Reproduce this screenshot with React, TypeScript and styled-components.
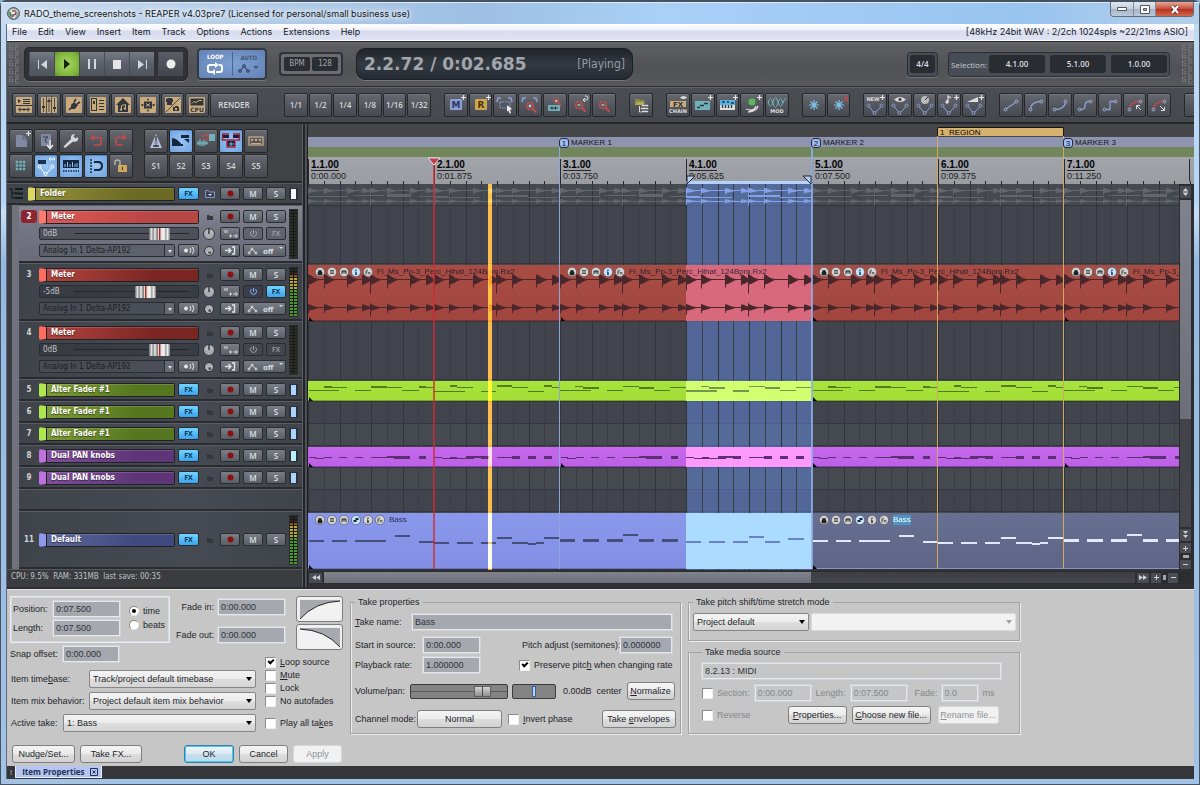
import React from "react";
import styled, { createGlobalStyle, css } from "styled-components";

/* ---------- tokens ---------- */
const UI = '"Open Sans", "Noto Sans", sans-serif';
const TITLE = 'Inter, "Open Sans", sans-serif';
const FORM = '"Liberation Sans", Arial, sans-serif';
const TRACK = '"DejaVu Sans Condensed", "DejaVu Sans", sans-serif';
const TAN = "#c9aa7c";
const TEAL = "#6fb0bb";
const BLUE = "#8c9fd6";
const RED = "#c64b4b";
const INK = "#33363b";
const LIGHT = "#d4d6da";

const MEASURE = 126;
const ROW = 22;
const TALL = 58;

const Global = createGlobalStyle`
  *, *::before, *::after { box-sizing: border-box; }
  body { margin: 0; background: #8fb4da; font-family: ${FORM}; }
  button, input, select { font: inherit; color: inherit; margin: 0; padding: 0; }
  fieldset { margin: 0; min-width: 0; }
  svg { display: block; }
`;

/* ---------- window frame ---------- */
const Window = styled.div`
  min-height: 100vh;
  display: flex;
  flex-direction: column;
  padding: 0 5px 5px;
  border-radius: 6px 6px 0 0;
  border: 1px solid #46525f;
  border-top-width: 2px;
  background: linear-gradient(#c3daf2 0, #b7d6f5 200px, #c8dff5 210px, #94b9e0 260px, #a3c3e6 100%);
`;
const TitleBar = styled.header`
  height: 22px;
  display: flex;
  align-items: center;
  gap: 4px;
  margin: 0 -5px;
  padding-left: 6px;
  background: linear-gradient(90deg, #c9dcf0 0, #bcd2ea 12%, #9dbfe3 40%, #a9d0f7 55%, #98c4f0 85%, #b4cfe9 100%);
  box-shadow: inset 0 1px 0 #dcebfa;
`;
const Title = styled.h1`
  flex: 1;
  margin: 0;
  font: 400 9px/13px ${TITLE};
  color: #10151c;
  text-shadow: 0 0 5px #fff, 0 0 8px #fff, 0 0 10px #fff;
`;
const WinButtons = styled.div`
  align-self: flex-start;
  display: flex;
  border: 1px solid #5f6c7b;
  border-top: 0;
  border-radius: 0 0 4px 4px;
  overflow: hidden;
  margin-right: 5px;
`;
const WinButton = styled.button<{ $close?: boolean }>`
  width: ${(p) => (p.$close ? 38 : 22)}px;
  height: 14px;
  border: 0;
  border-left: 1px solid #7f8d9d;
  display: grid;
  place-items: center;
  background: ${(p) =>
    p.$close ? "linear-gradient(#e6a595, #c8503c 48%, #b3301f 50%, #d2664a)" : "linear-gradient(#dfe8f1, #c3cfdc 48%, #a5b5c7 50%, #bccad9)"};
  &:first-child { border-left: 0; }
`;
const Client = styled.div`
  flex: 1;
  display: flex;
  flex-direction: column;
  min-width: 0;
  border-left: 1px solid #5a6a7c;
  background: #3f4145;
`;
const MenuBar = styled.nav`
  height: 17px;
  display: flex;
  align-items: center;
  padding: 0 6px 0 5px;
  border-bottom: 1px solid #fff;
  background: linear-gradient(#fff, #f0f2fa 35%, #d8dcef 45%, #dfe3f3);
  font: 400 9px/14px ${TITLE};
  color: #171a26;
`;
const MenuItem = styled.button`
  border: 0;
  background: none;
  margin-right: 11px;
`;
const MenuInfo = styled.span`
  margin-left: auto;
`;

/* ---------- transport ---------- */
const Transport = styled.section`
  height: 46px;
  display: flex;
  align-items: center;
  padding: 0 1px;
  border-top: 1px solid #23252a;
  border-bottom: 1px solid #2d2f33;
  background: linear-gradient(#6a6b6f 0, #5d5e62 3px, #515256 60%, #57585c);
`;
const Meander = styled.svg`
  flex: none;
  width: 12px;
  height: 40px;
`;
const ButtonWell = styled.div`
  display: flex;
  align-items: center;
  gap: 4px;
  margin-left: 4px;
  padding: 4px;
  border-radius: 5px;
  background: #303237;
  border: 1px solid #27292d;
  box-shadow: 0 1px 0 #74757a;
`;
const TransportKeys = styled.div`
  display: flex;
`;
const TransportKey = styled.button<{ $on?: boolean; $round?: boolean }>`
  width: 25px;
  height: 24px;
  border: 0;
  border-left: 1px solid #484b52;
  display: grid;
  place-items: center;
  background: ${(p) =>
    p.$on
      ? "radial-gradient(#a6da62, #7cb23c 75%, #5f8e2c)"
      : p.$round
        ? "linear-gradient(#5b5e66, #42454c)"
        : "linear-gradient(#767a84, #5b5f69 50%, #50545d)"};
`;
const LoopPad = styled.div`
  width: 70px;
  height: 32px;
  margin-left: 9px;
  display: flex;
  align-items: center;
  border: 2px solid #333a47;
  border-radius: 4px;
  background: radial-gradient(#7fa0d4, #6483b3);
  box-shadow: 0 1px 0 #74757a;
`;
const LoopKey = styled.button<{ $on?: boolean }>`
  flex: 1;
  height: 24px;
  border: 0;
  background: none;
  display: flex;
  flex-direction: column;
  align-items: center;
  justify-content: center;
  gap: 1px;
  font: 700 6px/8px ${TRACK};
  color: ${(p) => (p.$on ? "#fff" : "#44587c")};
  & + & { border-left: 1px solid #4c658d; }
`;
const Bpm = styled.div`
  display: flex;
  align-items: center;
  gap: 2px;
  height: 24px;
  margin-left: 12px;
  padding: 3px;
  border: 2px solid #303237;
  border-radius: 4px;
  background: #6a6c72;
`;
const BpmCell = styled.span`
  width: 26px;
  height: 14px;
  border-radius: 2px;
  text-align: center;
  font: 400 8px/14px ${TRACK};
  color: #a3a7ae;
  background: #2a2d32;
`;
const Display = styled.output`
  display: flex;
  align-items: center;
  justify-content: space-between;
  width: 277px;
  height: 32px;
  margin-left: 13px;
  padding: 0 7px;
  border: 1px solid #1c1f23;
  border-radius: 9px;
  background: linear-gradient(#20242a, #323941 50%, #252b32);
  box-shadow: 0 1px 0 #74757a;
  font: 700 17px/20px "DejaVu Sans", sans-serif;
  color: #a2a6ac;
`;
const PlayState = styled.span`
  font: 400 12px/20px ${TRACK};
  color: #969aa0;
`;
const TimePanel = styled.div<{ $push?: boolean }>`
  height: 25px;
  display: flex;
  align-items: center;
  gap: 5px;
  margin-left: ${(p) => (p.$push ? "auto" : "10px")};
  padding: 0 2px;
  border: 1px solid #2c2e33;
  border-radius: 3px;
  background: #484c54;
  box-shadow: 0 1px 0 #74757a;
  font: 400 8px/17px ${UI};
  color: #c9ccd1;
`;
const TimeCell = styled.span<{ $small?: boolean }>`
  width: ${(p) => (p.$small ? 25 : 56)}px;
  height: 18px;
  border-radius: 3px;
  text-align: center;
  background: #292c31;
  color: #dcdee2;
  font-weight: 600;
`;
const PanelLabel = styled.span`
  width: 33px;
`;

/* ---------- toolbar ---------- */
const Toolbar = styled.section`
  height: 37px;
  display: flex;
  align-items: center;
  gap: 13px;
  padding-left: 5px;
  overflow: hidden;
  border-top: 1px solid #606368;
  border-bottom: 2px solid #232528;
  background: linear-gradient(#4a4d51, #45484c);
`;
const ToolGroup = styled.div<{ $width: number }>`
  flex: none;
  display: flex;
  gap: 1px;
  width: ${(p) => p.$width}px;
`;
const ToolCluster = styled.div`
  flex: none;
  display: flex;
  gap: 1px;
  margin-right: 13px;
`;
const keyFace = css<{ $on?: boolean }>`
  border: 1px solid #25272b;
  border-radius: 2px;
  background: ${(p) => (p.$on ? "radial-gradient(#9cc6f4, #6fa3e0)" : "linear-gradient(#666a70, #54575d 50%, #474a50)")};
  box-shadow: inset 0 1px 0 ${(p) => (p.$on ? "#5c8cc8" : "#74777d")};
`;
const ToolKey = styled.button<{ $on?: boolean }>`
  flex: 1;
  min-width: 0;
  height: 24px;
  overflow: hidden;
  display: grid;
  place-items: center;
  ${keyFace}
  font: 600 8px/12px ${UI};
  color: ${LIGHT};
`;
const Spacer = styled.span`
  flex: none;
  width: 11px;
`;

/* ---------- main split ---------- */
const Main = styled.main`
  display: flex;
  align-items: stretch;
  border-bottom: 2px solid #2b2d30;
`;
const TrackPanel = styled.section`
  flex: none;
  width: 295px;
  display: flex;
  flex-direction: column;
  background: #3b3e44;
`;
const Splitter = styled.div`
  flex: none;
  width: 6px;
  background: linear-gradient(90deg, #5a5d63 0 1px, #232529 1px 3px, #4d5056 3px 5px, #1b1d20 5px);
`;
const PanelTools = styled.div`
  height: 59px;
  display: flex;
  gap: 11px;
  padding: 5px 2px 0;
  background: #404245;
  border-bottom: 2px solid #25272a;
`;
const ToolGrid = styled.div`
  display: grid;
  grid-template-columns: repeat(5, 24px);
  grid-auto-rows: 24px;
  gap: 1px;
`;
const TrackList = styled.div`
  display: flex;
  flex-direction: column;
`;
const Nested = styled.div`
  display: flex;
  flex-direction: column;
  border-left: 5px solid #3a3d42;
  background: #70737d;
  padding-left: 7px;
`;
const TrackRow = styled.div<{ $tall?: boolean; $lit?: boolean }>`
  height: ${(p) => (p.$tall ? TALL : ROW)}px;
  display: flex;
  align-items: center;
  gap: 3px;
  padding-right: 4px;
  border-top: 1px solid #5a5d63;
  border-bottom: 2px solid #292b2f;
  background: ${(p) => (p.$lit ? "linear-gradient(#868995, #747783 40%, #696c78)" : "linear-gradient(90deg, #3f434a, #464a52 60%, #3f434a)")};
`;
const TrackNumber = styled.span<{ $armed?: boolean; $top?: boolean }>`
  flex: none;
  width: 16px;
  height: 13px;
  text-align: center;
  font: 700 8px/13px ${TRACK};
  color: #d2d4d8;
  border-radius: 3px;
  margin-left: 2px;
  margin-right: -1px;
  ${(p) => p.$top && "align-self: flex-start; margin-top: 4px;"}
  ${(p) => p.$armed && "background: #8d2530; color: #fff;"}
`;
const TrackBody = styled.div`
  flex: 1;
  min-width: 0;
  display: flex;
  flex-direction: column;
  gap: 4px;
`;
const Strip = styled.div`
  display: flex;
  align-items: center;
  gap: 3px;
  height: 13px;
`;
const NameTag = styled.div<{ $chip: string; $from: string; $to: string }>`
  flex: 1;
  height: 14px;
  padding-left: 5px;
  border: 1px solid #1f2124;
  border-left: 7px solid ${(p) => p.$chip};
  border-radius: 2px;
  background: linear-gradient(100deg, ${(p) => p.$from}, ${(p) => p.$to} 70%);
  box-shadow: inset 1px 0 0 #1f2124, inset 0 1px 0 rgba(255, 255, 255, 0.15);
  font: 700 8px/12px ${TRACK};
  color: #fff;
  text-shadow: 0 1px 1px rgba(0, 0, 0, 0.5);
  white-space: nowrap;
`;
const MiniKey = styled.button<{ $width?: number; $tone?: "fx" | "dim" | "dark" }>`
  flex: none;
  width: ${(p) => p.$width ?? 20}px;
  height: 13px;
  display: grid;
  place-items: center;
  border: 1px solid #2a2c30;
  border-radius: 2px;
  font: 600 8px/10px ${UI};
  color: #dfe1e5;
  background: linear-gradient(#7a7e87, #5a5e67);
  ${(p) => p.$tone === "fx" && "background: linear-gradient(#72d4ff, #3ba4ee); color: #0c3350; font-weight: 700; font-size: 7px;"}
  ${(p) => p.$tone === "dim" && "background: rgba(70, 73, 80, 0.4); color: #a4a7ad; font-size: 7px;"}
  ${(p) => p.$tone === "dark" && "background: #3a3f4b; color: #8fb4ff;"}
`;
const IconCell = styled.span`
  flex: none;
  width: 15px;
  display: grid;
  place-items: center;
`;
const Fader = styled.div`
  flex: 1;
  min-width: 0;
  display: flex;
  align-items: center;
  height: 13px;
  border: 1px solid #2a2c30;
  border-radius: 2px;
  background: rgba(48, 51, 58, 0.55);
  font: 400 8px/11px ${TRACK};
  color: #c2c4c9;
`;
const FaderLabel = styled.label`
  flex: none;
  width: 34px;
  padding-left: 3px;
`;
const FaderInput = styled.input`
  appearance: none;
  flex: 1;
  width: 0;
  min-width: 0;
  height: 11px;
  margin-right: 9px;
  background: linear-gradient(transparent 5px, #24262a 5px 6px, transparent 6px);
  &::-webkit-slider-thumb {
    appearance: none;
    width: 21px;
    height: 12px;
    border-radius: 1px;
    background: linear-gradient(90deg, #6c6c6c, #ddd 12%, #888 20%, #eee 28%, #777 40%, #e8e8e8 45%, #a8281c 48% 53%, #ddd 56%, #f6f6f6 72%, #999 80%, #eee 88%, #777);
  }
`;
const Knob = styled.span<{ $small?: boolean }>`
  flex: none;
  width: ${(p) => (p.$small ? 10 : 12)}px;
  height: ${(p) => (p.$small ? 10 : 12)}px;
  margin: 0 ${(p) => (p.$small ? 3 : 2)}px 0 ${(p) => (p.$small ? 2 : 1)}px;
  border-radius: 50%;
  border: 1px solid #33353a;
  background: ${(p) =>
    p.$small ? "radial-gradient(circle at 60% 70%, #555 0 1px, #b9bbbf 2px, #95979c)" : "linear-gradient(90deg, #b5b7bb 4px, #55575c 4px 6px, #b5b7bb 6px) 0 0 / 100% 5px no-repeat, #a9abb0"};
`;
const DarkSelectBox = styled.div`
  flex: 1;
  min-width: 0;
  position: relative;
  &::after {
    content: "";
    position: absolute;
    right: 3px;
    top: 6px;
    border: 2px solid transparent;
    border-top: 3px solid #e0e2e6;
  }
`;
const DarkSelect = styled.select`
  appearance: none;
  display: block;
  width: 100%;
  height: 13px;
  padding-left: 3px;
  border: 1px solid #2a2c30;
  border-radius: 2px;
  background: linear-gradient(90deg, transparent calc(100% - 10px), #2a2c30 0 calc(100% - 9px), #666a73 0), rgba(80, 83, 92, 0.5);
  font: 400 8px/11px ${TRACK};
  color: #1c1e22;
`;
const MeterBox = styled.div`
  flex: none;
  width: 9px;
  height: 50px;
  border: 1px solid #2b2d31;
  background: #17191b;
`;
const Lamp = styled.div<{ $color: string }>`
  flex: none;
  width: 9px;
  height: 12px;
  border: 2px solid #2f3136;
  border-width: 1px 2px;
  background: ${(p) => p.$color};
`;
const StatusLine = styled.div`
  flex: none;
  height: 18px;
  padding-left: 4px;
  background: #3a3c40;
  border-top: 1px solid #55585d;
  font: 400 8px/13px ${TRACK};
  color: #c0c2c6;
  white-space: pre;
`;

/* ---------- timeline ---------- */
const Timeline = styled.section`
  flex: 1;
  min-width: 0;
  position: relative;
  overflow: hidden;
  display: flex;
  flex-direction: column;
  background: #2f3136;
`;
const RegionLane = styled.div`
  height: 13px;
  background: #454749;
  position: relative;
`;
const MarkerLane = styled.div`
  height: 10px;
  background: #8e94b0;
`;
const TempoLane = styled.div`
  height: 10px;
  background: #71865a;
`;
const BarLane = styled.div`
  position: relative;
  height: 27px;
  background: linear-gradient(#a3a5ac, #9a9ca2);
`;
const BarLabel = styled.div<{ $at: number }>`
  position: absolute;
  left: ${(p) => p.$at}px;
  top: 2px;
  min-height: 22px;
  padding-left: 2px;
  font: 400 9px/11px ${FORM};
  color: #1c1d20;
  border-left: 1px solid #26282c;
`;
const BarNumber = styled.div`
  width: 28px;
  padding-top: 1px;
  font: 700 10px/10px ${FORM};
  color: #000;
  border-bottom: 1px solid #26282c;
`;
const Flag = styled.div<{ $at: number }>`
  position: absolute;
  z-index: 6;
  top: 14px;
  left: ${(p) => p.$at}px;
  display: flex;
  align-items: center;
  gap: 2px;
  height: 10px;
  font: 400 8px/10px ${FORM};
  color: #14161c;
`;
const FlagNumber = styled.span`
  width: 10px;
  height: 10px;
  border: 1px solid #1d2c4a;
  border-radius: 3px;
  background: #9fb9ee;
  text-align: center;
  line-height: 9px;
`;
const RegionBar = styled.div<{ $at: number; $width: number }>`
  position: absolute;
  z-index: 6;
  top: 3px;
  left: ${(p) => p.$at}px;
  width: ${(p) => p.$width}px;
  height: 9px;
  padding-left: 2px;
  border: 1px solid #15140f;
  border-bottom: 0;
  border-radius: 2px 2px 0 0;
  background: #d6b26f;
  font: 400 8px/9px ${FORM};
  white-space: pre;
`;
const LaneRow = styled.div`
  display: flex;
`;
const LaneArea = styled.div`
  position: relative;
  flex: 1;
  min-width: 0;
  overflow: hidden;
  isolation: isolate;
`;
const Lane = styled.div<{ $tall?: boolean; $alt?: boolean }>`
  position: relative;
  height: ${(p) => (p.$tall ? TALL : ROW)}px;
  background: ${(p) => (p.$alt ? "#454a50" : "#41444d")};
  border-bottom: 1px solid #33363c;
`;
const Layer = styled.svg<{ $z: number }>`
  position: absolute;
  left: 0;
  top: 0;
  z-index: ${(p) => p.$z};
`;
const SelectionBand = styled.div`
  position: absolute;
  top: 0;
  bottom: 0;
  left: ${MEASURE * 3}px;
  width: ${MEASURE}px;
  background: rgba(99, 137, 225, 0.5);
`;
const ClipBox = styled.div<{ $at: number; $width: number; $fill: string; $edge: string }>`
  position: absolute;
  z-index: 2;
  top: 1px;
  bottom: 0;
  left: ${(p) => p.$at}px;
  width: ${(p) => p.$width}px;
  overflow: hidden;
  background: ${(p) => p.$fill};
  box-shadow: inset 0 -1px 0 ${(p) => p.$edge}, inset -1px 0 0 ${(p) => p.$edge};
`;
const ClipGlow = styled.div<{ $at: number; $fill: string }>`
  position: absolute;
  top: 0;
  bottom: 0;
  left: ${(p) => p.$at}px;
  width: ${MEASURE}px;
  background: ${(p) => p.$fill};
`;
const ClipHead = styled.div`
  position: relative;
  z-index: 1;
  display: flex;
  align-items: center;
  gap: 2px;
  padding: 2px 0 0 7px;
`;
const ClipName = styled.span<{ $picked?: boolean }>`
  margin-left: 2px;
  font: 400 8px/10px ${FORM};
  white-space: nowrap;
  color: ${(p) => (p.$picked ? "#fff" : "rgba(20, 24, 40, 0.85)")};
  background: ${(p) => (p.$picked ? "#4b94c4" : "none")};
`;
const TimeLine = styled.div<{ $at: number; $top: number; $color: string; $wide?: boolean }>`
  position: absolute;
  z-index: 5;
  left: ${(p) => p.$at}px;
  top: ${(p) => p.$top}px;
  bottom: 18px;
  width: ${(p) => (p.$wide ? 2 : 1)}px;
  background: ${(p) => p.$color};
`;
const PlayCursor = styled.div`
  position: absolute;
  z-index: 4;
  left: 180px;
  top: 0;
  bottom: 0;
  width: 4px;
  background: #bc7800;
  mix-blend-mode: plus-lighter;
`;
const EditHandle = styled.svg`
  position: absolute;
  z-index: 6;
  left: 119px;
  top: 33px;
`;
const SelectionHandles = styled.svg`
  position: absolute;
  z-index: 6;
  left: 378px;
  top: 51px;
`;
const VScroll = styled.div`
  flex: none;
  width: 15px;
  display: flex;
  flex-direction: column;
  align-items: center;
  gap: 2px;
  padding: 2px 3px 1px 1px;
  background: #2b2d31;
`;
const HScroll = styled.div`
  display: flex;
  align-items: center;
  gap: 2px;
  height: 13px;
  margin-top: 1px;
  padding: 1px 16px 1px 1px;
  background: #2b2d31;
`;
const ScrollKey = styled.button<{ $w?: number; $h?: number; $mark?: boolean }>`
  flex: none;
  width: ${(p) => p.$w ?? 11}px;
  height: ${(p) => p.$h ?? 11}px;
  display: grid;
  place-items: center;
  border: 0;
  background: ${(p) => (p.$mark ? "#a4a6ac" : "#4a4d53")};
`;
const ScrollTrack = styled.div<{ $vertical?: boolean }>`
  flex: 1;
  display: flex;
  flex-direction: ${(p) => (p.$vertical ? "column" : "row")};
  align-self: stretch;
  background: linear-gradient(#3d3f44, #44464c);
`;
const ScrollThumb = styled.div<{ $share: number }>`
  flex: 0 0 ${(p) => p.$share}%;
  background: linear-gradient(#80828c, #6d6f78);
`;

/* ---------- item properties ---------- */
const Properties = styled.form`
  flex: 1;
  display: flex;
  align-items: flex-start;
  gap: 7px;
  padding: 6px 4px 3px 3px;
  border-top: 1px solid #e2e2e2;
  background: #c6c6c6;
  font: 400 9px/12px ${FORM};
  color: #24252a;
`;
const ItemColumn = styled.div`
  flex: none;
  display: flex;
  flex-direction: column;
  gap: 12px;
  width: 333px;
`;
const ItemGrid = styled.div`
  display: grid;
  grid-template-columns: 160px 96px 22px 55px;
  grid-template-rows: 46px 24px 67px;
`;
const PositionBox = styled.div`
  display: flex;
  gap: 9px;
  width: 160px;
  height: 47px;
  padding: 4px 2px;
  border: 1px solid #e9ecf2;
  box-shadow: inset 0 0 0 1px #d4d8de;
`;
const Stack = styled.div<{ $gap: number }>`
  display: flex;
  flex-direction: column;
  gap: ${(p) => p.$gap}px;
`;
const RadioStack = styled(Stack)`
  padding-top: 4px;
`;
const Field = styled.div<{ $label?: number; $right?: boolean }>`
  display: flex;
  align-items: center;
  > label {
    flex: none;
    width: ${(p) => (p.$label ? p.$label + "px" : "auto")};
    padding-right: ${(p) => (p.$right ? 4 : 0)}px;
    text-align: ${(p) => (p.$right ? "right" : "left")};
    white-space: nowrap;
  }
`;
const SnapField = styled(Field)`
  grid-area: 2 / 1;
  align-self: center;
`;
const FadeStack = styled(Stack)`
  grid-area: 1 / 2 / 2 / 4;
  padding-top: 3px;
  padding-left: 3px;
`;
const CurveStack = styled(Stack)`
  grid-area: 1 / 4 / 3 / 5;
  align-items: flex-end;
`;
const ComboStack = styled(Stack)`
  grid-area: 3 / 1 / 4 / 3;
  padding-top: 4px;
  padding-right: 10px;
  padding-left: 1px;
`;
const CheckStack = styled.div`
  grid-area: 2 / 3 / 4 / 5;
  display: flex;
  flex-direction: column;
  gap: 1px;
  padding-top: 14px;
  margin-left: -1px;
`;
const TextBox = styled.input<{ $width?: number; $plain?: boolean }>`
  ${(p) => (p.$width ? `flex: none; width: ${p.$width}px;` : "flex: 1; min-width: 0;")}
  height: 16px;
  padding: 0 2px;
  border: 1px solid #e6e8ef;
  border-radius: 0;
  background: ${(p) => (p.$plain ? "#c6c6c6" : "#a6a8af")};
  color: #303338;
  box-shadow: 0 0 0 1px rgba(225, 228, 234, 0.4);
  &:disabled { background: #c6c6c6; color: #85878b; }
`;
const CurveKey = styled.button`
  width: 47px;
  height: 26px;
  padding: 2px;
  display: grid;
  place-items: center;
  border: 1px solid #7d7d7d;
  border-radius: 3px;
  background: #efefef;
`;
const SelectBox = styled.div<{ $width?: number; $off?: boolean }>`
  ${(p) => (p.$width ? `flex: none; width: ${p.$width}px;` : "flex: 1; min-width: 0;")}
  position: relative;
  &::after {
    content: "";
    position: absolute;
    right: 4px;
    top: 7px;
    border: 3px solid transparent;
    border-top: 4px solid ${(p) => (p.$off ? "#a0a0a0" : "#000")};
    border-bottom: 0;
  }
`;
const Combo = styled.select`
  appearance: none;
  display: block;
  width: 100%;
  height: 18px;
  padding: 0 3px;
  border: 1px solid #868686;
  border-radius: 2px;
  background: linear-gradient(#f3f3f3, #ececec 48%, #dedede 50%, #d4d4d4);
  &:disabled { background: #f2f2f2; border-color: #dcdcdc; opacity: 1; }
`;
const PushButton = styled.button<{ $width: number; $default?: boolean }>`
  width: ${(p) => p.$width}px;
  height: 18px;
  border: 1px solid ${(p) => (p.$default ? "#3a7ea4" : "#7f7f7f")};
  border-radius: 3px;
  background: linear-gradient(#f4f4f4, #ebebeb 48%, #dddddd 50%, #d2d2d2);
  white-space: nowrap;
  ${(p) => p.$default && "box-shadow: inset 0 0 0 1px #4fc8f2; background: linear-gradient(#eef6fb, #dceaf3 48%, #c7deeb 50%, #bcd9e9);"}
  &:disabled { background: #f1f1f1; border-color: #d8d8d8; color: #909195; }
`;
const ButtonRow = styled.div`
  display: flex;
  gap: 5px;
  padding-left: 2px;
`;
const Gap = styled.span<{ $width: number }>`
  flex: none;
  width: ${(p) => p.$width}px;
`;
const Tick = styled.label<{ $off?: boolean }>`
  display: flex;
  align-items: center;
  gap: 4px;
  height: 12px;
  white-space: nowrap;
  color: ${(p) => (p.$off ? "#85878b" : "inherit")};
`;
const LastTick = styled(Tick)`
  margin-top: 9px;
`;
const CheckMark = styled.input`
  appearance: none;
  flex: none;
  width: 11px;
  height: 11px;
  display: grid;
  place-items: center;
  background: #fff;
  border: 1px solid #efefef;
  border-top-color: #8a8a8a;
  border-left-color: #8a8a8a;
  &:checked::before {
    content: "";
    width: 6px;
    height: 4px;
    margin-top: -2px;
    border: solid #000;
    border-width: 0 0 2px 2px;
    transform: rotate(-45deg);
  }
`;
const RadioMark = styled.input`
  appearance: none;
  flex: none;
  width: 10px;
  height: 10px;
  border-radius: 50%;
  display: grid;
  place-items: center;
  background: #fff;
  border: 1px solid #e8e8e8;
  border-top-color: #888;
  border-left-color: #888;
  &:checked::before { content: ""; width: 4px; height: 4px; border-radius: 50%; background: #000; }
`;
const Group = styled.fieldset<{ $height: number; $inset?: boolean }>`
  height: ${(p) => p.$height}px;
  padding: ${(p) => (p.$inset ? "0 18px 0 13px" : "0 3px 0 4px")};
  border: 1px solid #a2a2a2;
  box-shadow: 1px 1px 0 #ececec, inset 1px 0 0 #ececec;
`;
const Legend = styled.legend`
  padding: 0 3px;
  height: 12px;
`;
const Line = styled.div<{ $top: number }>`
  display: flex;
  align-items: center;
  min-height: 16px;
  margin-top: ${(p) => p.$top}px;
`;
const LineLabel = styled.label<{ $width?: number; $off?: boolean }>`
  flex: none;
  width: ${(p) => (p.$width ? p.$width + "px" : "auto")};
  white-space: nowrap;
  color: ${(p) => (p.$off ? "#85878b" : "inherit")};
`;
const TakeColumn = styled.div`
  flex: none;
  width: 331px;
`;
const SourceColumn = styled.div`
  flex: none;
  width: 332px;
  display: flex;
  flex-direction: column;
  gap: 5px;
`;
const PropSlider = styled.input<{ $width: number; $pan?: boolean }>`
  appearance: none;
  flex: none;
  width: ${(p) => p.$width}px;
  height: 15px;
  margin-right: 4px;
  border: 1px solid #3c3c3c;
  border-radius: 2px;
  background: linear-gradient(transparent 6px, ${(p) => (p.$pan ? "transparent" : "#5c5c5c")} 6px 7px, transparent 7px), #838383;
  &::-webkit-slider-thumb {
    appearance: none;
    width: ${(p) => (p.$pan ? 4 : 17)}px;
    height: 11px;
    border: 1px solid ${(p) => (p.$pan ? "#345f9e" : "#606060")};
    background: ${(p) => (p.$pan ? "#b9d4ff" : "linear-gradient(90deg, transparent 7px, #444 7px 8px, transparent 8px), linear-gradient(#d5d5d5, #8f8f8f)")};
  }
`;
const DockTabs = styled.footer`
  height: 13px;
  display: flex;
  align-items: stretch;
  gap: 3px;
  padding-left: 3px;
  background: #34363a;
  color: #cfd1d5;
  font: 400 8px/12px ${UI};
`;
const DockTab = styled.button`
  display: flex;
  align-items: center;
  gap: 5px;
  height: 12px;
  padding: 0 3px 0 6px;
  border: 1px solid #e7eeff;
  border-top: 0;
  background: #b5c6f0;
  font: 700 8px/10px ${UI};
  color: #1c3158;
`;

/* ---------- drawn icons ---------- */
const Env = ({ c = BLUE }: { c?: string }) => (
  <g stroke={c} fill="none" strokeWidth="1">
    <path d="M6.500 14l4 5M13 19l4.500-5" />
    <circle cx="5.500" cy="12.500" r="1.500" />
    <circle cx="11.500" cy="20" r="1.500" />
    <circle cx="18.500" cy="12.500" r="1.500" />
  </g>
);
const Plus = () => <path d="M19.500 2v5M17 4.500h5" stroke="#e4e6ea" strokeWidth="1.200" />;
const Tan = ({ children }: { children: React.ReactNode }) => (
  <g>
    <rect x="4" y="4" width="16" height="16" rx="1" fill={TAN} />
    {children}
  </g>
);
const Lens = ({ sign }: { sign?: boolean }) => (
  <g stroke={RED} fill="none" strokeWidth="1.300">
    <circle cx="11" cy="12" r="3.400" />
    <path d="M13.500 14.500l4 4" strokeWidth="2" />
    <path d={sign ? "M9.500 12h3M11 10.500v3" : "M9.500 12h3"} stroke="#e6e6e6" strokeWidth="1.200" />
  </g>
);
const Curve = ({ d, a, b, c = BLUE, extra }: { d: string; a: [number, number]; b: [number, number]; c?: string; extra?: React.ReactNode }) => (
  <g fill="none">
    <path d={d} stroke={c} strokeWidth="1.300" />
    <circle cx={a[0]} cy={a[1]} r="1.400" stroke="#a8b4dc" />
    <circle cx={b[0]} cy={b[1]} r="1.400" stroke="#a8b4dc" />
    {extra}
  </g>
);
const Snow = ({ x }: { x?: boolean }) => (
  <g stroke="#7fc4ea" strokeWidth="1.200">
    <path d="M12 7v10M7 12h10M8.500 8.500l7 7M15.500 8.500l-7 7" />
    {x && <path d="M17 4l4 4M21 4l-4 4" stroke={RED} />}
  </g>
);

const ICONS: Record<string, React.ReactNode> = {
  list: <Tan><path d="M6 6l3 2-3 2zM11 6h7v1h-7zM11 8h7v1h-7zM11 10h7v1h-7zM4 12h16v1H4z" fill={INK} /><path d="M6 16.500h12M8 14.500v4M12 15v3M16 14.500v4" stroke={INK} /></Tan>,
  mixer: <Tan><path d="M6.500 5v14M9.500 4v16M12 5v14M14.500 4v16M17.500 5v14" stroke={INK} strokeWidth=".8" /><path d="M5 13h3v2H5zM10.500 7h3v2h-3zM16 14h3v2h-3z" fill={INK} /></Tan>,
  plug: <Tan><path d="M7 17l3-3M14 6l-2 3M18 9l-3 2" stroke={INK} strokeWidth="1.600" /><path d="M9 12l3-3 4 3-3 4-4 0z" fill={INK} /></Tan>,
  rack: <Tan><rect x="5.500" y="5.500" width="5" height="12" fill="none" stroke={INK} /><path d="M7 8h2v3H7zM13 7h5v1h-5zM13 10h5v1h-5zM13 13h5v1h-5zM13 16h5v1h-5z" fill={INK} /></Tan>,
  house: <Tan><path d="M12 5l7 7h-2v7H7v-7H5z" fill={INK} /><path d="M10.500 16.500v-4l4-1v4" stroke={TAN} fill="none" /><circle cx="10" cy="16.500" r="1.200" fill={TAN} /><circle cx="14" cy="15.500" r="1.200" fill={TAN} /></Tan>,
  route: <Tan><rect x="8" y="8.500" width="8" height="7" fill={INK} /><path d="M12 5.500v13M5.500 12h13" stroke={INK} strokeWidth="1.400" strokeDasharray="2 9" /><path d="M5 12l2-1.500v3zM19 12l-2-1.500v3z" fill={INK} /><path d="M10 10.500l4 3M14 10.500l-4 3" stroke={TAN} /></Tan>,
  swap: <Tan><path d="M5 6l2-1h3l2 1v3h-1v3H6V9H5zM12 14h2v-1h3v1h1v4h-6z" fill={INK} /><path d="M5 19L19 5" stroke={INK} strokeWidth=".8" /><circle cx="15" cy="16" r="1.200" fill={TAN} /></Tan>,
  cpu: <Tan><rect x="5.500" y="5.500" width="13" height="7" fill={INK} /><path d="M7 10.500l2-2 2 1 3-2 3 0" stroke={TAN} fill="none" /><text x="12" y="19" fontSize="6" fontWeight="700" textAnchor="middle" fill={INK} fontFamily="DejaVu Sans">CPU</text></Tan>,
  marker: <g><rect x="6" y="6" width="12" height="11" rx="1" fill={BLUE} /><text x="12" y="15" fontSize="9" fontWeight="700" textAnchor="middle" fill="#2b3a66" fontFamily="DejaVu Sans">M</text><Plus /></g>,
  region: <g><rect x="6" y="6" width="12" height="11" rx="1" fill="#cfa64f" /><text x="12" y="15" fontSize="9" fontWeight="700" textAnchor="middle" fill="#4a3508" fontFamily="DejaVu Sans">R</text><Plus /></g>,
  select: <g fill="none"><path d="M4 9l1-4h3M15 5h3l1 4" stroke={BLUE} strokeWidth="1.600" /><rect x="7" y="9" width="10" height="6" fill="#4c5468" stroke="#a2a8b4" strokeDasharray="1.500 1" /><path d="M14 12l5 4-2 1 1 3-1.500.5-1-3-1.500 1z" fill="#eee" /></g>,
  zoomsel: <g><path d="M4 9l1-4h3M15 5h3l1 4" stroke={BLUE} strokeWidth="1.600" fill="none" /><g transform="translate(1 1)"><Lens sign /></g></g>,
  zoomitem: <g><rect x="5" y="12" width="12" height="6" fill={TEAL} /><path d="M7 15h8M9 13.500v3M12.500 13.500v3" stroke={INK} /><g transform="translate(5 -1) scale(.75)"><Lens sign /></g></g>,
  zoomback: <g><Lens /><path d="M15 7h3a2 2 0 000-4h-1M17 5l-2 2 2 2" stroke="#ddd" fill="none" /></g>,
  zoomout: <Lens />,
  folder: <g><path d="M6 6h4l1 1h4v2H9l-3 4z" fill="#8e8842" /><path d="M6 12l2-3h8l-2 3z" fill="#b5ad58" /><path d="M10.500 13v6h2" stroke="#ddd" fill="none" /><path d="M13 12h6v1h-6zM12 15h7v1h-7zM13 18h6v1h-6z" fill="#ddd" stroke="#ddd" strokeWidth=".5" /></g>,
  fxchain: <g><rect x="4" y="8" width="16" height="6" fill={TAN} /><text x="12" y="14" fontSize="7" fontWeight="700" textAnchor="middle" fill={INK} fontFamily="DejaVu Sans">FX</text><text x="12" y="20" fontSize="5" textAnchor="middle" fill="#ddd" fontFamily="DejaVu Sans">CHAIN</text><path d="M14 4.500q3.500-3 7 0q-3.500 3-7 0" fill="#ddd" /></g>,
  envitem: <g><rect x="4" y="8" width="15" height="9" fill={TEAL} /><path d="M6 14.500h3M9 12.500h4M13 10.500h4" stroke={INK} strokeWidth="1.400" /><Plus /></g>,
  midi: <g><rect x="4" y="7" width="15" height="5" fill="#4fb4e8" /><rect x="4" y="12" width="15" height="5" fill="#ddd" /><path d="M6 9h3M11 9h2M15 10h3M6.500 12v3M9.500 12v3M12.500 12v3M15.500 12v3" stroke={INK} strokeWidth="1.400" /><Plus /></g>,
  mic: <g><circle cx="12" cy="9" r="3.500" fill="#5cb85c" /><path d="M6 16q8 3 10-3M8 19q9-1 10-6" stroke="#ddd" fill="none" strokeWidth="1.300" /><Plus /></g>,
  mod: <g><path d="M3 10q2.500-9 5 0t5 0t5 0M3 9q2.500 9 5 0t5 0t5 0M21 5q-2 2-3 5" stroke={TEAL} fill="none" /><text x="12" y="20" fontSize="5" fontWeight="700" textAnchor="middle" fill="#ddd" fontFamily="DejaVu Sans">MOD</text></g>,
  snow: <Snow />,
  snowx: <Snow x />,
  envnew: <g><text x="10" y="8" fontSize="5" fontWeight="700" textAnchor="middle" fill="#ddd" fontFamily="DejaVu Sans">NEW</text><Plus /><Env /></g>,
  enveye: <g><path d="M6 6.500q6-5 12 0q-6 5-12 0" fill="#ddd" /><circle cx="12" cy="6.500" r="1.500" fill={INK} /><Env /></g>,
  envknob: <g><circle cx="12" cy="7" r="4" fill="#bbb" /><path d="M12 7l3-3" stroke={INK} /><Env /></g>,
  envnote: <g><path d="M11 9V3l3 2" stroke="#ddd" fill="none" strokeWidth="1.300" /><circle cx="10" cy="9" r="1.700" fill="#ddd" /><Plus /><Env /></g>,
  envfade: <g><path d="M5 9l11-5v5z" fill="#ddd" /><Plus /><Env /></g>,
  lin: <Curve d="M7.500 15.500L16.500 9.500" a={[6.5, 16.5]} b={[17.5, 8.5]} />,
  arc: <Curve d="M6.500 15Q8 9 16 8.500" a={[6.5, 16.5]} b={[17.5, 8.5]} />,
  arc2: <Curve d="M8 16.500Q16 16 17.500 10" a={[6.5, 16.5]} b={[17.5, 8.5]} />,
  ess: <Curve d="M8 16.500Q12 16.500 12 12.500Q12 8.500 16 8.500" a={[6.5, 16.5]} b={[17.5, 8.5]} />,
  step: <Curve d="M8 16.500h4V8.500h4" a={[6.5, 16.5]} b={[17.5, 8.5]} />,
  arcup: <Curve d="M6.500 15Q8 9 16 8.500" a={[6.5, 16.5]} b={[17.5, 8.5]} c={RED} extra={<path d="M18 17l-4-4M13.500 16v-3.500H17" stroke="#ddd" />} />,
  arcdn: <Curve d="M6.500 15Q8 9 16 8.500" a={[6.5, 16.5]} b={[17.5, 8.5]} c={RED} extra={<path d="M13 13l4 4M17.500 14v3.500H14" stroke="#ddd" />} />,
  more: <path d="M11 8h2v8h-2z" fill={LIGHT} />,
  doc: <g><path d="M7 6h7l4 4v8H7z" fill="#8088a4" /><path d="M14 6v4h4" stroke="#5b6177" fill="none" /><Plus /></g>,
  docsave: <g><path d="M7 5h10v12H7z" fill="#8088a4" /><path d="M9 8h5l-3 3 2 3" stroke={INK} fill="none" /><path d="M16 11v8M13 16l3 3.500 3-3.500" stroke="#e4e6ea" fill="none" strokeWidth="1.500" /></g>,
  wrench: <path d="M6 19l-1.500-1.500L12 10q-1-4 3-5l1 0-1.500 2.500 2 2L19 8q1 4-3 5l-2-.5z" fill={LIGHT} />,
  undo: <path d="M10 6L7.500 8.500l2.500 2.500M8 8.500h7.500q1.500 0 1.500 1.500v4.500q0 1.500-1.500 1.500H10" stroke={RED} fill="none" strokeWidth="1.700" />,
  redo: <path d="M14 6l2.500 2.500L14 11M16 8.500H8.500Q7 8.500 7 10v4.500Q7 16 8.500 16H14" stroke={RED} fill="none" strokeWidth="1.700" />,
  metro: <g><path d="M12 5l6 14H6z" fill="#b9c2dc" /><path d="M12 7v11M9 17l6 0" stroke={INK} strokeWidth="1.300" /><circle cx="12" cy="14" r="2" fill="#8792b6" /></g>,
  xfade: <g fill="#16283f"><path d="M3 9q5 0 10 7H3zM12 6h8v3h-8zM15 10h5v4z" /><path d="M3 15h11v2H3z" /></g>,
  group: <g><rect x="15" y="5" width="6" height="7" fill={TEAL} /><rect x="9" y="6" width="5" height="5" fill="none" stroke={RED} /><path d="M3 14h11M4 12v4M6 10v7M8 12v5M10 11v6M12 12v4" stroke={TEAL} strokeWidth="1.300" /></g>,
  ripple: <g><path d="M4 6h6v3H4zM14 6h6v3h-6zM8 12h8v5H8z" fill="#14233c" /><path d="M3.500 5v6H7M20.500 5v6H17M3 5h7M14 5h7M8 11h8v7H8z" stroke="#a42034" fill="none" strokeWidth="1.300" /><path d="M10 15h5M12 13v4" stroke="#7fb0ec" /></g>,
  ruler: <g><rect x="5" y="8" width="14" height="8" fill="none" stroke={TAN} strokeWidth="1.300" /><path d="M7 10h2v2H7zM11 10h2v2h-2zM15 10h2v2h-2zM7 14h10v1H7z" fill={TAN} /></g>,
  grid: <path d="M7 7h2v2H7zM10.500 7h2v2h-2zM14 7h2v2h-2zM7 10.500h2v2H7zM10.500 10.500h2v2h-2zM14 10.500h2v2h-2zM7 14h2v2H7zM10.500 14h2v2h-2zM14 14h2v2h-2z" fill={TEAL} stroke={TEAL} strokeWidth=".5" />,
  envmove: <g><rect x="4" y="6" width="8" height="4" fill="#1a3152" /><path d="M15 5h6M16.500 3.500L15 5l1.500 1.500M19.500 3.500L21 5l-1.500 1.500" stroke="#fff" fill="none" /><Env c="#fff" /></g>,
  keys: <g><rect x="4" y="6" width="16" height="8" fill="#16283f" /><path d="M6 10v3M8.500 8v5M11 10v3M13.500 8v5M16 10v3M18 9v4" stroke="#8dbcf2" /><path d="M4 17h16" stroke="#16283f" strokeWidth="1.500" strokeDasharray="1.500 1" /></g>,
  snap: <g fill="none" stroke="#16283f"><path d="M7 5v14" strokeWidth="1.500" strokeDasharray="2 1" /><path d="M10 8h4q4 0 4 4t-4 4h-4" strokeWidth="2" /></g>,
  lock: <g><path d="M6 11V8q0-2 2.500-2T11 8v3" stroke="#b6b2a8" fill="none" strokeWidth="1.500" /><rect x="9" y="11" width="9" height="7" fill="#d0a85c" /><path d="M13 13h1v3h-1z" fill={INK} /></g>,
};
const Icon = ({ name }: { name: string }) => (
  <svg width="22" height="22" viewBox="1 1 22 22">{ICONS[name]}</svg>
);

/* ---------- data ---------- */
type Tone = { chip: string; from: string; to: string };
const RED_TONE: Tone = { chip: "#ff6c60", from: "#b24540", to: "#7c2624" };
const LIT_TONE: Tone = { chip: "#ff7b6e", from: "#dd5a56", to: "#b84643" };
const GREEN_TONE: Tone = { chip: "#aee84e", from: "#7f9c36", to: "#55771f" };
const PURPLE_TONE: Tone = { chip: "#bd72e0", from: "#80509a", to: "#5e3677" };
const BLUE_TONE: Tone = { chip: "#8f9aec", from: "#5d679c", to: "#414a7e" };

type Track = { n: number; name: string; tone: Tone; fader?: { db: string; at: number }; live?: boolean; armed?: boolean; tall?: boolean; lamp?: string };
const TRACKS: Track[] = [
  { n: 2, name: "Meter", tone: LIT_TONE, fader: { db: "0dB", at: 80 }, armed: true },
  { n: 3, name: "Meter", tone: RED_TONE, fader: { db: "-5dB", at: 65 }, live: true },
  { n: 4, name: "Meter", tone: RED_TONE, fader: { db: "0dB", at: 80 } },
  { n: 5, name: "Alter Fader #1", tone: GREEN_TONE, lamp: "#a9d4ff" },
  { n: 6, name: "Alter Fader #1", tone: GREEN_TONE, lamp: "#a9d4ff" },
  { n: 7, name: "Alter Fader #1", tone: GREEN_TONE, lamp: "#a9d4ff" },
  { n: 8, name: "Dual PAN knobs", tone: PURPLE_TONE, lamp: "#b8ecff" },
  { n: 9, name: "Dual PAN knobs", tone: PURPLE_TONE, lamp: "#a9d4ff" },
  { n: 10, name: "", tone: BLUE_TONE },
  { n: 11, name: "Default", tone: BLUE_TONE, tall: true, live: true },
];

type Note = [number, number, number, number?];
const GREEN_NOTES: Note[] = [
  [1, 30, 9], [16, 8, 5, 2], [24, 15, 6], [47, 16, 9], [63, 16, 5, 2], [79, 15, 6], [94, 17, 9], [111, 7, 5, 2], [118, 8, 6],
  [126, 31, 10], [142, 7, 4, 2], [149, 16, 6], [173, 15, 10], [189, 15, 4, 2], [204, 16, 6], [220, 16, 10], [236, 8, 4, 2], [244, 8, 6],
  [252, 31, 9], [267, 8, 5], [275, 16, 6, 2], [299, 16, 9], [315, 16, 5], [331, 15, 6, 2], [346, 16, 9], [362, 16, 6],
  [378, 31, 9, 2], [393, 8, 5], [401, 16, 6, 2], [425, 16, 9, 2], [441, 16, 5], [457, 15, 6, 2], [472, 16, 9], [488, 15, 6],
];
const PURPLE_NOTES: Note[] = [
  [1, 7, 10], [7, 9, 11], [16, 8, 10], [31, 8, 10], [47, 8, 10], [63, 16, 10], [79, 23, 9, 2], [86, 16, 10, 2], [111, 7, 9, 3],
  [126, 8, 10], [134, 24, 11], [142, 7, 10], [158, 23, 9, 2], [158, 8, 10, 2], [173, 8, 10, 2], [189, 16, 10], [204, 8, 9, 3], [220, 8, 9, 3], [236, 8, 9, 3],
];
const BASS_NOTES: Note[] = [
  [1, 15, 27, 2], [24, 15, 27, 2], [47, 31, 27, 2], [87, 15, 22, 2], [111, 15, 28, 2],
  [126, 15, 29, 2], [149, 16, 29, 2], [173, 15, 29, 2], [189, 15, 24, 2], [204, 16, 29, 2], [220, 8, 30, 2], [228, 8, 29, 2], [236, 15, 24, 2],
  [252, 15, 26, 3], [275, 16, 26, 3], [299, 16, 26, 3], [315, 15, 21, 2], [331, 15, 26, 3], [354, 16, 26, 3],
  [378, 15, 28, 2], [401, 16, 28, 2], [425, 15, 28, 2], [441, 15, 23, 2], [457, 15, 28, 2], [480, 16, 25, 2],
];
const HITS: [number, number][] = [
  [0, 9], [16, 9], [39, 8], [54, 6], [62, 14], [79, 9], [102, 8], [118, 6],
  [126, 11], [141, 9], [165, 8], [181, 6], [188, 14], [204, 9], [228, 8], [244, 6],
];
const wave = (mid: number, gain: number) =>
  HITS.map(([x, a]) => {
    const h = a * gain;
    const b = 5 * gain;
    return `M${x} ${mid - h * 0.6}L${x + 1} ${mid - b}L${x + 3} ${mid - b * 0.8}L${x + 6} ${mid - b * 0.35}L${x + 12} ${mid}L${x + 8} ${mid + b * 0.35}L${x + 4} ${mid + b * 0.8}L${x + 1} ${mid + b}V${mid + h}H${x}z`;
  }).join("");

type Clip = { at: number; len: number; glow?: number };
const FOUR: Clip[] = [{ at: 0, len: 2 }, { at: 2, len: 2, glow: 1 }, { at: 4, len: 2 }, { at: 6, len: 2 }];
const LONG: Clip[] = [{ at: 0, len: 4, glow: 3 }, { at: 4, len: 4 }];

/* ---------- pieces ---------- */
const Notes = ({ notes, color, lit }: { notes: Note[]; color: string; lit?: string }) => (
  <Layer $z={0} width={MEASURE * 4} height="58">
    {notes.map(([x, w, y, h = 1], i) => (
      <rect key={i} x={x} y={y} width={w} height={h} fill={lit && x >= MEASURE * 3 ? lit : color} />
    ))}
  </Layer>
);
const Corner = ({ bottom }: { bottom: number }) => (
  <Layer $z={1} width="8" height={bottom}>
    <path d={`M1 ${bottom - 5}v4h4z`} fill="#000" />
  </Layer>
);
const Badge = ({ kind, on }: { kind: string; on?: boolean }) => (
  <svg width="10" height="10" viewBox="0 0 10 10">
    <circle cx="5" cy="5" r="4.700" fill={on ? "#bfe2ff" : "#d3d3d3"} stroke="#4b4b50" strokeWidth=".6" />
    {kind === "lock" && <path d="M3 5h4v3H3zM3.800 5V3.500h2.400V5" fill="#222" stroke="#222" strokeWidth=".7" />}
    {kind === "eq" && <path d="M3 3.500h4M3 5h4M3 6.500h4" stroke="#333" strokeWidth=".8" />}
    {kind === "mute" && <path d="M3 7V4h4v3M5 4v2.500" stroke="#222" fill="none" />}
    {kind === "loop" && <path d="M2.500 5h3v2h-3zM4.500 3h3v2h-3z" fill="#222" />}
    {kind === "info" && <path d="M5 2.500v1.500M5 5v2.500M4 7.300h2M4 5h1" stroke="#223" strokeWidth="1.100" />}
    {kind === "fx" && <path d="M3 7.500V4.500Q3 3 5 3M2.500 5h2M5 5l2.500 2.500M7.500 5L5 7.500" stroke="#333" fill="none" strokeWidth=".8" />}
  </svg>
);
const AudioClip = ({ clip }: { clip: Clip }) => (
  <ClipBox $at={clip.at * MEASURE} $width={clip.len * MEASURE} $fill="linear-gradient(#a84c44, #a1463f)" $edge="#7d2f2c">
    {clip.glow !== undefined && <ClipGlow $at={clip.glow * MEASURE} $fill="#d8687c" />}
    <Layer $z={0} width={MEASURE * 2} height="57">
      <path d={wave(14.5, 1)} fill="#48262b" />
      <path d={wave(42.5, 0.65)} fill="#48262b" />
      <path d="M0 14.500h252M0 42.500h252" stroke="#4d282b" />
    </Layer>
    <Corner bottom={57} />
    <ClipHead>
      {["lock", "eq", "mute", "info", "fx"].map((k) => (
        <Badge key={k} kind={k} on={k === "info"} />
      ))}
      <ClipName>Fl_Ms_Pp-3_Perc_Hihat_124Bpm.Rx2</ClipName>
    </ClipHead>
  </ClipBox>
);
const BassClip = ({ clip, picked }: { clip: Clip; picked?: boolean }) => (
  <ClipBox
    $at={clip.at * MEASURE}
    $width={clip.len * MEASURE}
    $fill={picked ? "linear-gradient(#687092, #5d6486)" : "linear-gradient(#8a98ec, #828fe4)"}
    $edge={picked ? "#8b93c0" : "#6674c8"}
  >
    {clip.glow !== undefined && <ClipGlow $at={clip.glow * MEASURE} $fill="#abdcff" />}
    <Notes notes={BASS_NOTES} color={picked ? "#e3e7ff" : "#454e7a"} lit={picked ? undefined : "#6a80c8"} />
    <Corner bottom={57} />
    <ClipHead>
      {["lock", "eq", "mute", "loop", "info", "fx"].map((k) => (
        <Badge key={k} kind={k} on={k === "loop"} />
      ))}
      <ClipName $picked={picked}>Bass</ClipName>
    </ClipHead>
  </ClipBox>
);

const LevelMeter = ({ live }: { live?: boolean }) => (
  <MeterBox>
    <svg width="7" height="48">
      {Array.from({ length: 16 }, (_, i) => {
        const y = i * 3;
        const c = !live ? "#2c3024" : i < 2 ? "#27291f" : i === 2 ? "#a04a1c" : i < 7 ? "#b8a82c" : "#4c9a2c";
        return <path key={i} d={`M0 ${y + 1}h3v2h-3zM4 ${y + 1}h3v2h-3z`} fill={c} />;
      })}
    </svg>
  </MeterBox>
);
const RecDot = () => (
  <svg width="7" height="7"><circle cx="3.500" cy="3.500" r="3" fill="#8c0f12" /></svg>
);
const FolderGlyph = ({ open }: { open?: boolean }) => (
  <svg width="12" height="10" viewBox="0 0 12 10">
    {open ? (
      <g fill="none" stroke="#8794b8"><path d="M1.500 8.500v-7h3l1 1.500h5v5.500z" fill="#39425c" /><path d="M4 5h4L6 7z" fill="#cfd6ea" stroke="none" /></g>
    ) : (
      <path d="M3 3h2l1 1h3v4H3z" fill="#34373c" />
    )}
  </svg>
);
const PowerGlyph = () => (
  <svg width="9" height="9" viewBox="0 0 9 9" fill="none" stroke="currentColor"><path d="M4.500 1v4M2.500 2.200a3 3 0 104 0" /></svg>
);
const TrackButtons = () => (
  <>
    <MiniKey type="button" aria-label="Record arm"><RecDot /></MiniKey>
    <MiniKey type="button">M</MiniKey>
    <MiniKey type="button">S</MiniKey>
  </>
);

const TrackStrip = ({ track }: { track: Track }) => {
  const tall = Boolean(track.tall || track.fader);
  if (!track.name) return <TrackRow />;
  return (
    <TrackRow $tall={tall} $lit={track.armed}>
      <TrackNumber $armed={track.armed} $top={Boolean(track.fader)}>{track.n}</TrackNumber>
      <TrackBody>
        <Strip>
          <NameTag $chip={track.tone.chip} $from={track.tone.from} $to={track.tone.to}>{track.name}</NameTag>
          {!track.fader && <MiniKey type="button" $width={21} $tone="fx">FX</MiniKey>}
          <IconCell><FolderGlyph /></IconCell>
          <TrackButtons />
        </Strip>
        {track.fader && (
          <>
            <Strip>
              <Fader>
                <FaderLabel htmlFor={`vol${track.n}`}>{track.fader.db}</FaderLabel>
                <FaderInput id={`vol${track.n}`} type="range" defaultValue={track.fader.at} />
              </Fader>
              <Knob />
              <MiniKey type="button" aria-label="Routing">
                <svg width="15" height="9" fill="none" stroke="#d8dade"><path d="M2 1v3M4 1v3M6 7h3M7.500 5.500v3M10 7h4M12.500 5l2 2-2 2" /></svg>
              </MiniKey>
              <MiniKey type="button" $tone={track.live ? "dark" : "dim"} aria-label="Bypass"><PowerGlyph /></MiniKey>
              <MiniKey type="button" $tone={track.live ? "fx" : "dim"}>FX</MiniKey>
            </Strip>
            <Strip>
              <DarkSelectBox>
                <DarkSelect aria-label="Input"><option>Analog In 1 Delta-AP192</option></DarkSelect>
              </DarkSelectBox>
              <MiniKey type="button" $width={21} aria-label="Monitor">
                <svg width="14" height="9" fill="none" stroke="#e4e6ea"><circle cx="4" cy="4.500" r="2" fill="#e4e6ea" stroke="none" /><path d="M8 2q1.500 2.500 0 5M10.500 1q2.500 3.500 0 7" /></svg>
              </MiniKey>
              <Knob $small />
              <MiniKey type="button" aria-label="Record mode">
                <svg width="12" height="9" fill="none" stroke="#e4e6ea"><path d="M1 4.500h5M4.500 2l2.500 2.500L4.500 7M8 1h2.500v7H8" strokeWidth="1.300" /></svg>
              </MiniKey>
              <MiniKey type="button" $width={43}>
                <svg width="41" height="11" fill="none" stroke="#d8dade">
                  <path d="M5 8l3-4 4 4" /><circle cx="5" cy="8" r="1" /><circle cx="8" cy="4" r="1" /><circle cx="12" cy="8" r="1" />
                  <path d="M35 2h4l-2 2z" fill="#d8dade" stroke="none" />
                  <text x="19" y="9" fontSize="7" fontFamily="DejaVu Sans" fontWeight="700" fill="#d8dade" stroke="none">off</text>
                </svg>
              </MiniKey>
            </Strip>
          </>
        )}
      </TrackBody>
      {tall ? <LevelMeter live={track.live} /> : <Lamp $color={track.lamp ?? "#fff"} />}
    </TrackRow>
  );
};

const GreekKey = () => (
  <Meander viewBox="0 0 12 40" aria-hidden="true">
    {[0, 8, 16, 24, 32].map((y) => (
      <path key={y} transform={`translate(0 ${y})`} d="M5.500 1H1.500v5h3V3.500h-1.500M7 1h4M11 3H7.500v4h3.500" stroke="#7b7c81" fill="none" strokeWidth=".9" />
    ))}
  </Meander>
);

const FolderWaves = () => (
  <>
    <path d={wave(6.5, 0.5)} />
    <path d={wave(17, 0.35)} />
    <path d="M0 6h252v1H0zM0 12h40v1H0zM46 11h30v1H46zM79 10h24v3H79zM110 12h30v1h-30zM126 13h46v1h-46zM189 11h31v2h-31zM220 13h32v1h-32zM0 17h252v1H0z" />
  </>
);

const TOOL_GROUPS: { width: number; keys: string[]; text?: boolean }[] = [
  { width: 147, keys: ["1/1", "1/2", "1/4", "1/8", "1/16", "1/32"], text: true },
  { width: 172, keys: ["marker", "region", "select", "zoomsel", "zoomitem", "zoomback", "zoomout"] },
  { width: 24, keys: ["folder"] },
  { width: 123, keys: ["fxchain", "envitem", "midi", "mic", "mod"] },
  { width: 48, keys: ["snow", "snowx"] },
  { width: 123, keys: ["envnew", "enveye", "envknob", "envnote", "envfade"] },
  { width: 172, keys: ["lin", "arc", "arc2", "ess", "step", "arcup", "arcdn"] },
  { width: 24, keys: ["more"] },
];
const BARS = [
  ["1.1.00", "0:00.000"], ["2.1.00", "0:01.875"], ["3.1.00", "0:03.750"], ["4.1.00", "0:05.625"],
  ["5.1.00", "0:07.500"], ["6.1.00", "0:09.375"], ["7.1.00", "0:11.250"],
];
const gridX = Array.from({ length: 112 }, (_, i) => Math.round((i * MEASURE) / 8));

const TimelineView = () => (
  <Timeline>
    <RegionLane>
      <RegionBar $at={629} $width={127}>1  REGION</RegionBar>
    </RegionLane>
    <MarkerLane />
    <TempoLane />
    <BarLane>
      {BARS.map(([bar, time], i) => (
        <BarLabel key={bar} $at={i * MEASURE}>
          <BarNumber>{bar}</BarNumber>
          {time}
        </BarLabel>
      ))}
      <BarLabel $at={BARS.length * MEASURE - 1} />
      <Layer $z={1} width="1764" height="27">
        {gridX.map((x) => <rect key={x} x={x} y="24" width="1" height="3" fill="#26282c" />)}
        <rect x={MEASURE * 3} y="24" width={MEASURE} height="3" fill="#b5d2ff" />
      </Layer>
    </BarLane>
    <LaneRow>
      <LaneArea>
        <Lane $alt>
          <Layer $z={2} width="1764" height="22">
            {[0, 1, 2, 3, 4, 5, 6].map((i) => (
              <g key={i} transform={`translate(${i * 252} 0)`} fill="#62656b"><FolderWaves /></g>
            ))}
            <svg x={MEASURE * 3} width={MEASURE} height="22" viewBox="126 0 126 22" fill="#83a1ea"><FolderWaves /></svg>
          </Layer>
        </Lane>
        <Lane $tall />
        <Lane $tall $alt>{FOUR.map((c) => <AudioClip key={c.at} clip={c} />)}</Lane>
        <Lane $tall />
        <Lane $alt>
          {LONG.map((c) => (
            <ClipBox key={c.at} $at={c.at * MEASURE} $width={c.len * MEASURE} $fill="linear-gradient(#a8e43e, #a2dc34)" $edge="#78a822">
              {c.glow !== undefined && <ClipGlow $at={c.glow * MEASURE} $fill="#d2ff70" />}
              <Notes notes={GREEN_NOTES} color="#567a1c" lit={c.glow !== undefined ? "#6f9a4c" : undefined} />
              <Corner bottom={21} />
            </ClipBox>
          ))}
        </Lane>
        <Lane />
        <Lane $alt />
        <Lane>
          {FOUR.map((c) => (
            <ClipBox key={c.at} $at={c.at * MEASURE} $width={c.len * MEASURE} $fill="linear-gradient(#c668ee, #bb60e4)" $edge="#8d41b0">
              {c.glow !== undefined && <ClipGlow $at={c.glow * MEASURE} $fill="#ff9afc" />}
              <Notes notes={PURPLE_NOTES} color="#5c2f73" />
              <Corner bottom={21} />
            </ClipBox>
          ))}
        </Lane>
        <Lane $alt />
        <Lane />
        <Lane $tall $alt>
          {LONG.map((c, i) => <BassClip key={c.at} clip={c} picked={i === 1} />)}
        </Lane>
        <SelectionBand />
        <Layer $z={1} width="1764" height="396">
          {gridX.map((x, i) => <rect key={x} x={x} y="0" width="1" height="396" fill={i % 2 ? "#3a3e45" : "#303338"} />)}
        </Layer>
        <PlayCursor />
      </LaneArea>
      <VScroll>
        <ScrollKey type="button" aria-label="Scroll up" $h={12}><svg width="7" height="8"><path d="M3.500 0L6 3H1zM1 3.500h5v1H1zM3.500 8L6 5H1z" fill="#d0d2d6" /></svg></ScrollKey>
        <ScrollTrack $vertical style={{ width: 11 }}>
          <ScrollThumb $share={67} />
        </ScrollTrack>
        <ScrollKey type="button" aria-label="Scroll down" $h={12}><svg width="7" height="8"><path d="M1 0h5L3.500 3zM1 4h5L3.500 7z" fill="#d0d2d6" /></svg></ScrollKey>
        <ScrollKey type="button" aria-label="Zoom in" $h={10}><svg width="5" height="5"><path d="M2 0h1v5H2zM0 2h5v1H0z" fill="#d0d2d6" /></svg></ScrollKey>
        <ScrollKey type="button" aria-label="Zoom" $w={6} $h={3} $mark />
        <ScrollKey type="button" aria-label="Zoom out" $h={9}><svg width="5" height="5"><path d="M0 2h5v1H0z" fill="#d0d2d6" /></svg></ScrollKey>
      </VScroll>
    </LaneRow>
    <HScroll>
      <ScrollKey type="button" aria-label="Scroll left" $w={13} $h={10}><svg width="8" height="5"><path d="M4 0v5L0 2.500zM8 0v5L4 2.500z" fill="#d0d2d6" /></svg></ScrollKey>
      <ScrollTrack><ScrollThumb $share={60} /></ScrollTrack>
      <ScrollKey type="button" aria-label="Scroll right" $w={12} $h={10}><svg width="8" height="5"><path d="M0 0v5l4-2.500zM4 0v5l4-2.500z" fill="#d0d2d6" /></svg></ScrollKey>
      <ScrollKey type="button" aria-label="Zoom in" $w={10} $h={10}><svg width="5" height="5"><path d="M2 0h1v5H2zM0 2h5v1H0z" fill="#d0d2d6" /></svg></ScrollKey>
      <ScrollKey type="button" aria-label="Zoom" $w={3} $h={5} $mark />
      <ScrollKey type="button" aria-label="Zoom out" $w={10} $h={10}><svg width="5" height="5"><path d="M0 2h5v1H0z" fill="#d0d2d6" /></svg></ScrollKey>
    </HScroll>
    <TimeLine $at={251} $top={13} $color="#8fa6dc" />
    <TimeLine $at={503} $top={13} $color="rgba(143, 175, 236, 0.85)" $wide />
    <TimeLine $at={629} $top={4} $color="#cfaa62" />
    <TimeLine $at={755} $top={4} $color="#cfaa62" />
    <TimeLine $at={125} $top={38} $color="rgba(205, 48, 52, 0.75)" $wide />
    {[["1", 251], ["2", 503], ["3", 755]].map(([n, at]) => (
      <Flag key={n} $at={at as number}>
        <FlagNumber>{n}</FlagNumber>
        MARKER {n}
      </Flag>
    ))}
    <EditHandle width="14" height="9"><path d="M1 1h12L7 8z" fill="#c23b40" stroke="#dfe6f6" /></EditHandle>
    <SelectionHandles width="127" height="10"><path d="M1 1h8L1 9zM125 1h-8l8 8z" fill="#b9cdf0" stroke="#20242c" /></SelectionHandles>
  </Timeline>
);

const Check = ({ label, on, off }: { label: React.ReactNode; on?: boolean; off?: boolean }) => (
  <Tick $off={off}>
    <CheckMark type="checkbox" defaultChecked={on} />
    <span>{label}</span>
  </Tick>
);

const PropertiesPanel = () => (
  <Properties onSubmit={(e) => e.preventDefault()}>
    <ItemColumn>
      <ItemGrid>
        <PositionBox>
          <Stack $gap={3}>
            <Field $label={40}><label htmlFor="pos">Position:</label><TextBox id="pos" $width={67} defaultValue="0:07.500" /></Field>
            <Field $label={40}><label htmlFor="len">Length:</label><TextBox id="len" $width={67} defaultValue="0:07.500" /></Field>
          </Stack>
          <RadioStack $gap={2}>
            <Tick><RadioMark type="radio" name="unit" defaultChecked />time</Tick>
            <Tick><RadioMark type="radio" name="unit" />beats</Tick>
          </RadioStack>
        </PositionBox>
        <SnapField $label={53}><label htmlFor="snap">Snap offset:</label><TextBox id="snap" $width={56} defaultValue="0:00.000" /></SnapField>
        <FadeStack $gap={12}>
          <Field $label={45} $right><label htmlFor="fin">Fade in:</label><TextBox id="fin" $width={67} defaultValue="0:00.000" /></Field>
          <Field $label={45} $right><label htmlFor="fout">Fade out:</label><TextBox id="fout" $width={67} defaultValue="0:00.000" /></Field>
        </FadeStack>
        <CurveStack $gap={2}>
          <CurveKey type="button" aria-label="Fade in shape"><svg width="40" height="19"><path d="M0 0h40v19H0z" fill="#a7a9af" /><path d="M0 19Q15 2 40 1v18z" fill="#f2f2f2" /><path d="M0 19Q15 2 40 1" stroke="#222" fill="none" /></svg></CurveKey>
          <CurveKey type="button" aria-label="Fade out shape"><svg width="40" height="19"><path d="M0 0h40v19H0z" fill="#a7a9af" /><path d="M0 1Q25 2 40 19H0z" fill="#f2f2f2" /><path d="M0 1Q25 2 40 19" stroke="#222" fill="none" /></svg></CurveKey>
        </CurveStack>
        <ComboStack $gap={4}>
          <Field $label={78}><label htmlFor="tb">Item time<u>b</u>ase:</label><SelectBox $width={167}><Combo id="tb"><option>Track/project default timebase</option></Combo></SelectBox></Field>
          <Field $label={78}><label htmlFor="mix">Item mix behavior:</label><SelectBox $width={167}><Combo id="mix"><option>Project default item mix behavior</option></Combo></SelectBox></Field>
          <Field $label={52}><label htmlFor="take">Active take:</label><SelectBox $width={193}><Combo id="take"><option>1: Bass</option></Combo></SelectBox></Field>
        </ComboStack>
        <CheckStack>
          <Check label={<><u>L</u>oop source</>} on />
          <Check label={<><u>M</u>ute</>} />
          <Check label="Lock" />
          <Check label="No autofades" />
          <LastTick><CheckMark type="checkbox" /><span>Play all ta<u>k</u>es</span></LastTick>
        </CheckStack>
      </ItemGrid>
      <ButtonRow>
        <PushButton type="button" $width={63}>Nudge/Set...</PushButton>
        <PushButton type="button" $width={62}>Take FX...</PushButton>
        <Gap $width={32} />
        <PushButton type="submit" $width={50} $default>OK</PushButton>
        <PushButton type="button" $width={49}>Cancel</PushButton>
        <PushButton type="button" $width={49} disabled>Apply</PushButton>
      </ButtonRow>
    </ItemColumn>

    <TakeColumn>
      <Group $height={138}>
        <Legend>Take properties</Legend>
        <Line $top={6}>
          <LineLabel htmlFor="tname" $width={57}><u>T</u>ake name:</LineLabel>
          <TextBox id="tname" defaultValue="Bass" /><Gap $width={5} />
        </Line>
        <Line $top={7}>
          <LineLabel htmlFor="start" $width={68}>Start in source:</LineLabel>
          <TextBox id="start" $width={57} defaultValue="0:00.000" />
          <Gap $width={42} />
          <LineLabel htmlFor="pitch" $width={98}>Pitch adjust (semitones):</LineLabel>
          <TextBox id="pitch" $width={52} defaultValue="0.000000" />
        </Line>
        <Line $top={4}>
          <LineLabel htmlFor="rate" $width={68}>Playback rate:</LineLabel>
          <TextBox id="rate" $width={57} defaultValue="1.000000" />
          <Gap $width={39} />
          <Check label={<>Preserve pitc<u>h</u> when changing rate</>} on />
        </Line>
        <Line $top={9}>
          <LineLabel htmlFor="vol" $width={55}>Volume/pan:</LineLabel>
          <PropSlider id="vol" type="range" $width={98} defaultValue={80} />
          <PropSlider aria-label="Pan" type="range" $width={44} $pan />
          <Gap $width={3} />
          <span>0.00dB&nbsp; center</span>
          <Gap $width={5} />
          <PushButton type="button" $width={48}><u>N</u>ormalize</PushButton>
        </Line>
        <Line $top={10}>
          <LineLabel $width={62}>Channel mode:</LineLabel>
          <PushButton type="button" $width={85}>Normal</PushButton>
          <Gap $width={6} />
          <Check label={<><u>I</u>nvert phase</>} />
          <Gap $width={29} />
          <PushButton type="button" $width={74}>Take <u>e</u>nvelopes</PushButton>
        </Line>
      </Group>
    </TakeColumn>

    <SourceColumn>
      <Group $height={45}>
        <Legend>Take pitch shift/time stretch mode</Legend>
        <Line $top={5}>
          <SelectBox $width={116}><Combo aria-label="Pitch mode"><option>Project default</option></Combo></SelectBox>
          <Gap $width={2} />
          <SelectBox $off><Combo aria-label="Pitch parameter" disabled><option /></Combo></SelectBox>
        </Line>
      </Group>
      <Group $height={88} $inset>
        <Legend>Take media source</Legend>
        <Line $top={5}><TextBox aria-label="Source" $plain readOnly defaultValue="8.2.13 : MIDI" /></Line>
        <Line $top={6}>
          <Check label="Section:" off />
          <Gap $width={5} />
          <TextBox aria-label="Section start" $width={56} disabled defaultValue="0:00.000" />
          <Gap $width={5} />
          <LineLabel htmlFor="slen" $width={35} $off>Length:</LineLabel>
          <TextBox id="slen" $width={56} disabled defaultValue="0:07.500" />
          <Gap $width={8} />
          <LineLabel htmlFor="sfade" $width={27} $off>Fade:</LineLabel>
          <TextBox id="sfade" $width={36} disabled defaultValue="0.0" />
          <Gap $width={5} />
          <LineLabel $off>ms</LineLabel>
        </Line>
        <Line $top={5}>
          <Check label="Reverse" off />
          <Gap $width={37} />
          <PushButton type="button" $width={59}><u>P</u>roperties...</PushButton>
          <Gap $width={5} />
          <PushButton type="button" $width={79}><u>C</u>hoose new file...</PushButton>
          <Gap $width={7} />
          <PushButton type="button" $width={61} disabled><u>R</u>ename file...</PushButton>
        </Line>
      </Group>
    </SourceColumn>
  </Properties>
);

export default function App() {
  return (
    <Window>
      <Global />
      <TitleBar>
        <svg width="13" height="13" viewBox="0 0 13 13">
          <circle cx="6.500" cy="6.500" r="6" fill="#8d9a96" stroke="#4f5b5c" />
          <path d="M2 4q4-4 9 0l-2 5-2 3-3-4z" fill="#e8ecea" />
          <path d="M5 4q4-1 4 1.500T6 8v2" stroke="#8b4f5a" fill="none" strokeWidth="1.500" />
          <path d="M2.500 4.500l2 5" stroke="#3f8f5c" strokeWidth="1.800" />
        </svg>
        <Title>RADO_theme_screenshots - REAPER v4.03pre7 (Licensed for personal/small business use)</Title>
        <WinButtons>
          <WinButton type="button" aria-label="Minimize"><svg width="10" height="4"><path d="M.5.500h9v3h-9z" fill="#fff" stroke="#556" /></svg></WinButton>
          <WinButton type="button" aria-label="Restore"><svg width="10" height="9"><path d="M.5.500h9v8h-9z" fill="#fff" stroke="#556" /><path d="M3.500 3.500h3v2h-3z" fill="#aab8c8" stroke="#556" /></svg></WinButton>
          <WinButton type="button" aria-label="Close" $close><svg width="10" height="9"><path d="M2 1l6 7M8 1L2 8" stroke="#5b2a2a" strokeWidth="3.600" /><path d="M2 1l6 7M8 1L2 8" stroke="#fff" strokeWidth="2.200" /></svg></WinButton>
        </WinButtons>
      </TitleBar>
      <Client>
        <MenuBar>
          {["File", "Edit", "View", "Insert", "Item", "Track", "Options", "Actions", "Extensions", "Help"].map((m) => (
            <MenuItem key={m} type="button">{m}</MenuItem>
          ))}
          <MenuInfo>[48kHz 24bit WAV : 2/2ch 1024spls ~22/21ms ASIO]</MenuInfo>
        </MenuBar>

        <Transport>
          <GreekKey />
          <ButtonWell>
            <TransportKeys>
              <TransportKey type="button" aria-label="Go to start"><svg width="11" height="9"><path d="M1 0h1v9H1zM10 0v9L4 4.500z" fill={LIGHT} /></svg></TransportKey>
              <TransportKey type="button" aria-label="Play" $on><svg width="8" height="12"><path d="M1 1l6 5-6 5z" fill="#1b2410" /></svg></TransportKey>
              <TransportKey type="button" aria-label="Pause"><svg width="8" height="10"><path d="M0 0h2v10H0zM6 0h2v10H6z" fill={LIGHT} /></svg></TransportKey>
              <TransportKey type="button" aria-label="Stop"><svg width="8" height="9"><path d="M0 0h8v9H0z" fill="#e4e5e8" /></svg></TransportKey>
              <TransportKey type="button" aria-label="Go to end"><svg width="11" height="9"><path d="M9 0h1v9H9zM1 0v9l6-4.500z" fill={LIGHT} /></svg></TransportKey>
            </TransportKeys>
            <TransportKey type="button" aria-label="Record" $round><svg width="10" height="10"><circle cx="5" cy="5" r="4.500" fill="#eee" /></svg></TransportKey>
          </ButtonWell>
          <LoopPad>
            <LoopKey type="button" $on>
              LOOP
              <svg width="18" height="13" fill="none" stroke="#fff" strokeWidth="2"><path d="M8 10H4q-2 0-2-2V5q0-2 2-2h5M10 10h4q2 0 2-2V5q0-2-2-2h-1" /><path d="M9 0v6l4-3zM9 7v6l-4-3z" fill="#fff" stroke="none" /></svg>
            </LoopKey>
            <LoopKey type="button">
              AUTO
              <svg width="24" height="11" fill="none" stroke="#44587c"><path d="M3 8l4-5 4 5" strokeWidth="1.300" /><circle cx="3" cy="8" r="1.500" fill="#44587c" /><circle cx="7" cy="3" r="1.500" fill="#44587c" /><circle cx="11" cy="8" r="1.500" fill="#44587c" /><path d="M16 3h6l-3 3z" fill="#44587c" stroke="none" /></svg>
            </LoopKey>
          </LoopPad>
          <Bpm><BpmCell>BPM</BpmCell><BpmCell>128</BpmCell></Bpm>
          <Display>2.2.72 / 0:02.685<PlayState>[Playing]</PlayState></Display>
          <TimePanel $push><TimeCell $small>4/4</TimeCell></TimePanel>
          <TimePanel>
            <PanelLabel>Selection:</PanelLabel>
            <TimeCell>4.1.00</TimeCell>
            <TimeCell>5.1.00</TimeCell>
            <TimeCell>1.0.00</TimeCell>
          </TimePanel>
          <Spacer />
          <GreekKey />
        </Transport>

        <Toolbar>
          <ToolCluster>
            <ToolGroup $width={197}>
              {["list", "mixer", "plug", "rack", "house", "route", "swap", "cpu"].map((k) => (
                <ToolKey key={k} type="button" aria-label={k}><Icon name={k} /></ToolKey>
              ))}
            </ToolGroup>
            <ToolGroup $width={48}><ToolKey type="button">RENDER</ToolKey></ToolGroup>
          </ToolCluster>
          {TOOL_GROUPS.map((g) => (
            <ToolGroup key={g.width + g.keys[0]} $width={g.width}>
              {g.keys.map((k) => (
                <ToolKey key={k} type="button" aria-label={k}>{g.text ? k : <Icon name={k} />}</ToolKey>
              ))}
            </ToolGroup>
          ))}
        </Toolbar>

        <Main>
          <TrackPanel>
            <PanelTools>
              <ToolGrid>
                {["doc", "docsave", "wrench", "undo", "redo", "grid", "envmove", "keys", "snap", "lock"].map((k) => (
                  <ToolKey key={k} type="button" aria-label={k} $on={["envmove", "keys", "snap"].includes(k)}><Icon name={k} /></ToolKey>
                ))}
              </ToolGrid>
              <ToolGrid>
                {["metro", "xfade", "group", "ripple", "ruler"].map((k) => (
                  <ToolKey key={k} type="button" aria-label={k} $on={k === "xfade" || k === "ripple"}><Icon name={k} /></ToolKey>
                ))}
                {["S1", "S2", "S3", "S4", "S5"].map((k) => <ToolKey key={k} type="button">{k}</ToolKey>)}
              </ToolGrid>
            </PanelTools>
            <TrackList>
              <TrackRow>
                <svg width="18" height="14" fill="none" stroke="#17191c" strokeWidth="2"><path d="M2 2h3v9h4M5 6h4" strokeWidth="1" /><path d="M8 2h8M8 6.500h8M8 11h8" /></svg>
                <TrackBody>
                  <Strip>
                    <NameTag $chip="#dcd860" $from="#96923e" $to="#6c6a24">Folder</NameTag>
                    <MiniKey type="button" $width={21} $tone="fx">FX</MiniKey>
                    <IconCell><FolderGlyph open /></IconCell>
                    <TrackButtons />
                  </Strip>
                </TrackBody>
                <Lamp $color="#f2f6ff" />
              </TrackRow>
              <Nested>
                {TRACKS.map((t) => <TrackStrip key={t.n} track={t} />)}
              </Nested>
            </TrackList>
            <StatusLine>CPU: 9.5%  RAM: 331MB  last save: 00:35</StatusLine>
          </TrackPanel>
          <Splitter />
          <TimelineView />
        </Main>

        <PropertiesPanel />
        <DockTabs>
          <span>!</span>
          <DockTab type="button">
            Item Properties
            <svg width="8" height="8" fill="none" stroke="#1c3158"><path d="M.5.500h7v7h-7zM2.500 2.500l3 3M5.500 2.500l-3 3" /></svg>
          </DockTab>
        </DockTabs>
      </Client>
    </Window>
  );
}
